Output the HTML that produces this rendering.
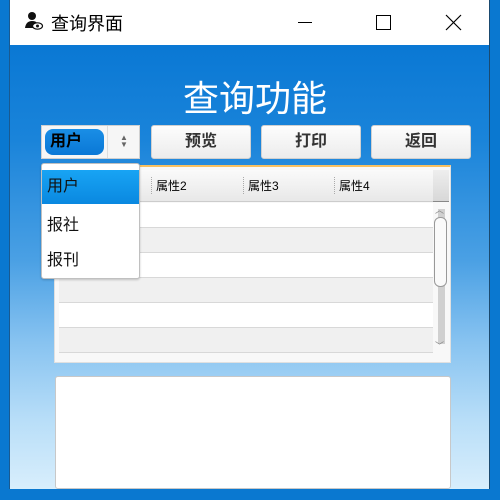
<!DOCTYPE html>
<html><head><meta charset="utf-8"><style>
*{margin:0;padding:0;box-sizing:border-box}
body{width:500px;height:500px;overflow:hidden;background:#0a78d0;font-family:"Liberation Sans","Noto Sans CJK SC",sans-serif;position:relative}
.abs{position:absolute}
#win{left:10px;top:0;width:479px;height:489px;background:linear-gradient(180deg,#0a78d4 45px,#1a84da 140px,#4aa0e4 260px,#86c2f0 340px,#b8def8 420px,#d8eefc 489px);box-shadow:-1px 0 0 #1a5a90,1px 0 0 #1a4a70}
#title{left:0;top:0;width:479px;height:45px;background:#fff}
.btn{height:34px;top:125px;background:linear-gradient(#fdfdfd,#ececec);border:1px solid #d0d0d0;border-radius:3px;font-size:16px;font-weight:bold;color:#333;text-align:center;line-height:32px}
.row{left:4px;width:374px;height:25px;border-bottom:1px solid #d8d8d8}
.hdr{font-size:12px;color:#000;top:10px}
</style></head><body>
<div id="win" class="abs">
 <div id="title" class="abs">
  <svg class="abs" style="left:14px;top:11px" width="20" height="20" viewBox="0 0 20 20"><circle cx="8" cy="5" r="4" fill="#111"/><path d="M1 17 Q2 10 8 10 Q12 10 13 12 L9 17 Z" fill="#111"/><ellipse cx="13.5" cy="15" rx="5" ry="3.2" fill="#fff" stroke="#111" stroke-width="1.2"/><circle cx="13.5" cy="15" r="1.5" fill="#111"/></svg>
  <div class="abs" style="left:41px;top:10px;font-size:18px;color:#000">查询界面</div>
  <div class="abs" style="left:288px;top:22px;width:14px;height:1px;background:#000"></div>
  <div class="abs" style="left:366px;top:15px;width:15px;height:15px;border:1.3px solid #000"></div>
  <svg class="abs" style="left:435px;top:14px" width="17" height="17"><path d="M1 1L16 16M16 1L1 16" stroke="#000" stroke-width="1.2"/></svg>
 </div>
 <div class="abs" style="left:0;width:490px;top:70px;text-align:center;font-size:36px;color:#fff">查询功能</div>
 <div class="abs" style="left:31px;top:125px;width:99px;height:34px;background:#f6f6f6;border:1px solid #d0d0d0">
  <div class="abs" style="left:3px;top:3px;width:59px;height:26px;background:linear-gradient(#1a8ee6,#0a78d6);border-radius:8px;font-size:16px;font-weight:bold;line-height:26px;padding-left:5px;color:#000">用户</div>
  <div class="abs" style="left:65px;top:0;width:1px;height:32px;background:#ddd"></div>
  <div class="abs" style="left:78px;top:8px;font-size:8px;color:#666;line-height:7px">▲<br>▼</div>
 </div>
 <div class="abs btn" style="left:141px;width:100px">预览</div>
 <div class="abs btn" style="left:251px;width:100px">打印</div>
 <div class="abs btn" style="left:361px;width:100px">返回</div>
 <div class="abs" style="left:44px;top:165px;width:397px;height:198px;background:#f8f8f8;border:1px solid #e0e0e0;border-top:2px solid #f8c060">
  <div class="abs" style="left:4px;top:3px;width:374px;height:32px;background:linear-gradient(#fafafa,#e8e8e8);border-bottom:1px solid #ccc"></div>
  <div class="abs hdr" style="left:96px;border-left:1px dotted #aaa;padding-left:4px">属性2</div>
  <div class="abs hdr" style="left:188px;border-left:1px dotted #aaa;padding-left:4px">属性3</div>
  <div class="abs hdr" style="left:279px;border-left:1px dotted #aaa;padding-left:4px">属性4</div>
  <div class="abs row" style="top:36px;background:#fff"></div>
  <div class="abs row" style="top:61px;background:#f0f0f0"></div>
  <div class="abs row" style="top:86px;background:#fff"></div>
  <div class="abs row" style="top:111px;background:#f0f0f0"></div>
  <div class="abs row" style="top:136px;background:#fff"></div>
  <div class="abs row" style="top:161px;background:#f0f0f0"></div>
  <div class="abs" style="left:378px;top:3px;width:16px;height:32px;background:linear-gradient(#eee,#d8d8d8);border-bottom:1px solid #888"></div>
  <div class="abs" style="left:383px;top:42px;width:7px;height:135px;background:#d0d0d0"></div>
  <div class="abs" style="left:379px;top:50px;width:13px;height:70px;background:#fafafa;border:1px solid #999;border-radius:6px"></div>
  <div class="abs" style="left:380px;top:36px;font-size:9px;color:#888">︿</div>
  <div class="abs" style="left:380px;top:172px;font-size:9px;color:#888">﹀</div>
 </div>
 <div class="abs" style="left:45px;top:376px;width:396px;height:113px;background:#fff;border:1px solid #c8c8c8;border-radius:3px"></div>
 <div class="abs" style="left:31px;top:163px;width:99px;height:116px;background:#fff;border:1px solid #c0c0c0;border-radius:3px;box-shadow:0 1px 2px rgba(0,0,0,.2);font-size:16px;color:#111">
  <div class="abs" style="left:0;top:6px;width:97px;height:34px;background:linear-gradient(#18a4f4,#0a88e0);padding-left:5px;line-height:34px">用户</div>
  <div class="abs" style="left:5px;top:47px">报社</div>
  <div class="abs" style="left:5px;top:82px">报刊</div>
 </div>
</div>
</body></html>
